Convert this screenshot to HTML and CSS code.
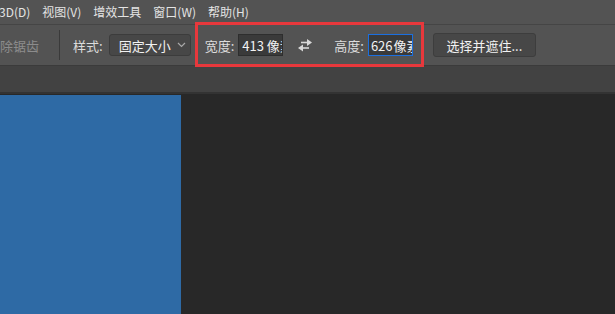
FILE: index.html
```html
<!DOCTYPE html>
<html lang="zh-CN">

<head>
    <meta charset="UTF-8" />
    <title>选框工具选项</title>
    <link rel="stylesheet" href="styles.css">
</head>

<body>
    <!-- 菜单栏 -->
    <div class="menubar">
        <span class="menu-item first">3D(D)</span>
        <span class="menu-item">视图(V)</span>
        <span class="menu-item">增效工具</span>
        <span class="menu-item">窗口(W)</span>
        <span class="menu-item">帮助(H)</span>
    </div>

    <!-- 选项栏 -->
    <div class="optionsbar">
        <span class="opt-disabled">除锯齿</span>
        <span class="sep"></span>
        <span class="opt-label style-label">样式:</span>
        <div class="select">
            <span>固定大小</span>
            <svg class="chev" width="9" height="6" viewBox="0 0 9 6">
                <path d="M1 1 L4.5 4.5 L8 1" fill="none" stroke="#a8a8a8" stroke-width="1.2" />
            </svg>
        </div>
        <span class="opt-label w-label">宽度:</span>
        <div class="field"><span>413 像素</span></div>
        <svg class="swap" width="16" height="14" viewBox="0 0 16 14">
            <path d="M4 4.5 H13" stroke="#d8d8d8" stroke-width="1.6" />
            <path d="M10 1 L15 4.5 L10 8 Z" fill="#d8d8d8" />
            <path d="M3 10 H12" stroke="#d8d8d8" stroke-width="1.6" />
            <path d="M6 6.5 L1 10 L6 13.5 Z" fill="#d8d8d8" />
        </svg>
        <span class="opt-label h-label">高度:</span>
        <div class="field active"><span>626</span><i class="caret"></i><span>像素</span></div>
        <button class="btn">选择并遮住...</button>

        <!-- 标注框 -->
        <div class="mark"></div>
    </div>

    <!-- 文档标签栏 -->
    <div class="tabbar"></div>

    <!-- 画布 -->
    <div class="workspace">
        <div class="doc"></div>
    </div>
</body>

</html>
```

FILE: styles.css
```css
:root {
    --panel: #535353;
    --tabs: #424242;
    --canvas: #282828;
    --text: #e4e4e4;
    --cjk: "Noto Sans CJK SC", "Microsoft YaHei", sans-serif;
}

* {
    box-sizing: border-box;
}

html,
body {
    margin: 0;
    height: 100%;
    overflow: hidden;
}

body {
    background: var(--canvas);
    font-family: var(--cjk);
    color: var(--text);
    display: flex;
    flex-direction: column;
}

.menubar {
    height: 24px;
    background: var(--panel);
    display: flex;
    align-items: center;
    font-size: 12px;
    line-height: 1;
}

.menu-item {
    padding: 0 6px;
    white-space: nowrap;
}

.menu-item.first {
    margin-left: -7px;
}

.optionsbar {
    position: relative;
    height: 41px;
    background: var(--panel);
    border-top: 1px solid #454545;
    display: flex;
    align-items: center;
    font-size: 13px;
    white-space: nowrap;
}

.opt-disabled {
    color: #8c8c8c;
    margin-left: 0;
    width: 40px;
}

.sep {
    width: 1px;
    height: 30px;
    background: #3a3a3a;
    margin-left: 19px;
}

.opt-label {
    color: #dcdcdc;
}

.style-label {
    margin-left: 13px;
}

.select {
    margin-left: 6px;
    width: 82px;
    height: 22px;
    background: #474747;
    border: 1px solid #3c3c3c;
    border-radius: 3px;
    display: flex;
    align-items: center;
    padding-left: 9px;
    color: #f2f2f2;
}

.chev {
    margin-left: auto;
    margin-right: 4px;
}

.w-label {
    margin-left: 14px;
}

.field {
    margin-left: 4px;
    width: 45px;
    height: 22px;
    background: #3a3a3a;
    border: 1px solid #2e2e2e;
    display: flex;
    align-items: center;
    padding-left: 3px;
    overflow: hidden;
    color: #f2f2f2;
}

.field.active {
    border-color: #1b6fe0;
    padding-left: 2px;
}

.caret {
    width: 1px;
    height: 14px;
    background: #ffffff;
    margin: 0 0 0 1px;
}

.swap {
    margin-left: 14px;
}

.h-label {
    margin-left: 21px;
}

.btn {
    margin-left: 20px;
    width: 103px;
    height: 24px;
    background: #474747;
    border: 1px solid #3d3d3d;
    border-radius: 3px;
    color: #f2f2f2;
    font-family: inherit;
    font-size: 13px;
    padding: 0;
}

.mark {
    position: absolute;
    left: 195px;
    top: -3px;
    width: 229px;
    height: 45px;
    border: 3px solid #e8383c;
}

.tabbar {
    height: 29px;
    background: var(--tabs);
    border-top: 1px solid #3b3b3b;
    border-bottom: 2px solid #333333;
}

.workspace {
    flex: 1;
    background: var(--canvas);
    padding-top: 1px;
}

.doc {
    width: 181px;
    height: 100%;
    background: #2e6aa5;
}
```
